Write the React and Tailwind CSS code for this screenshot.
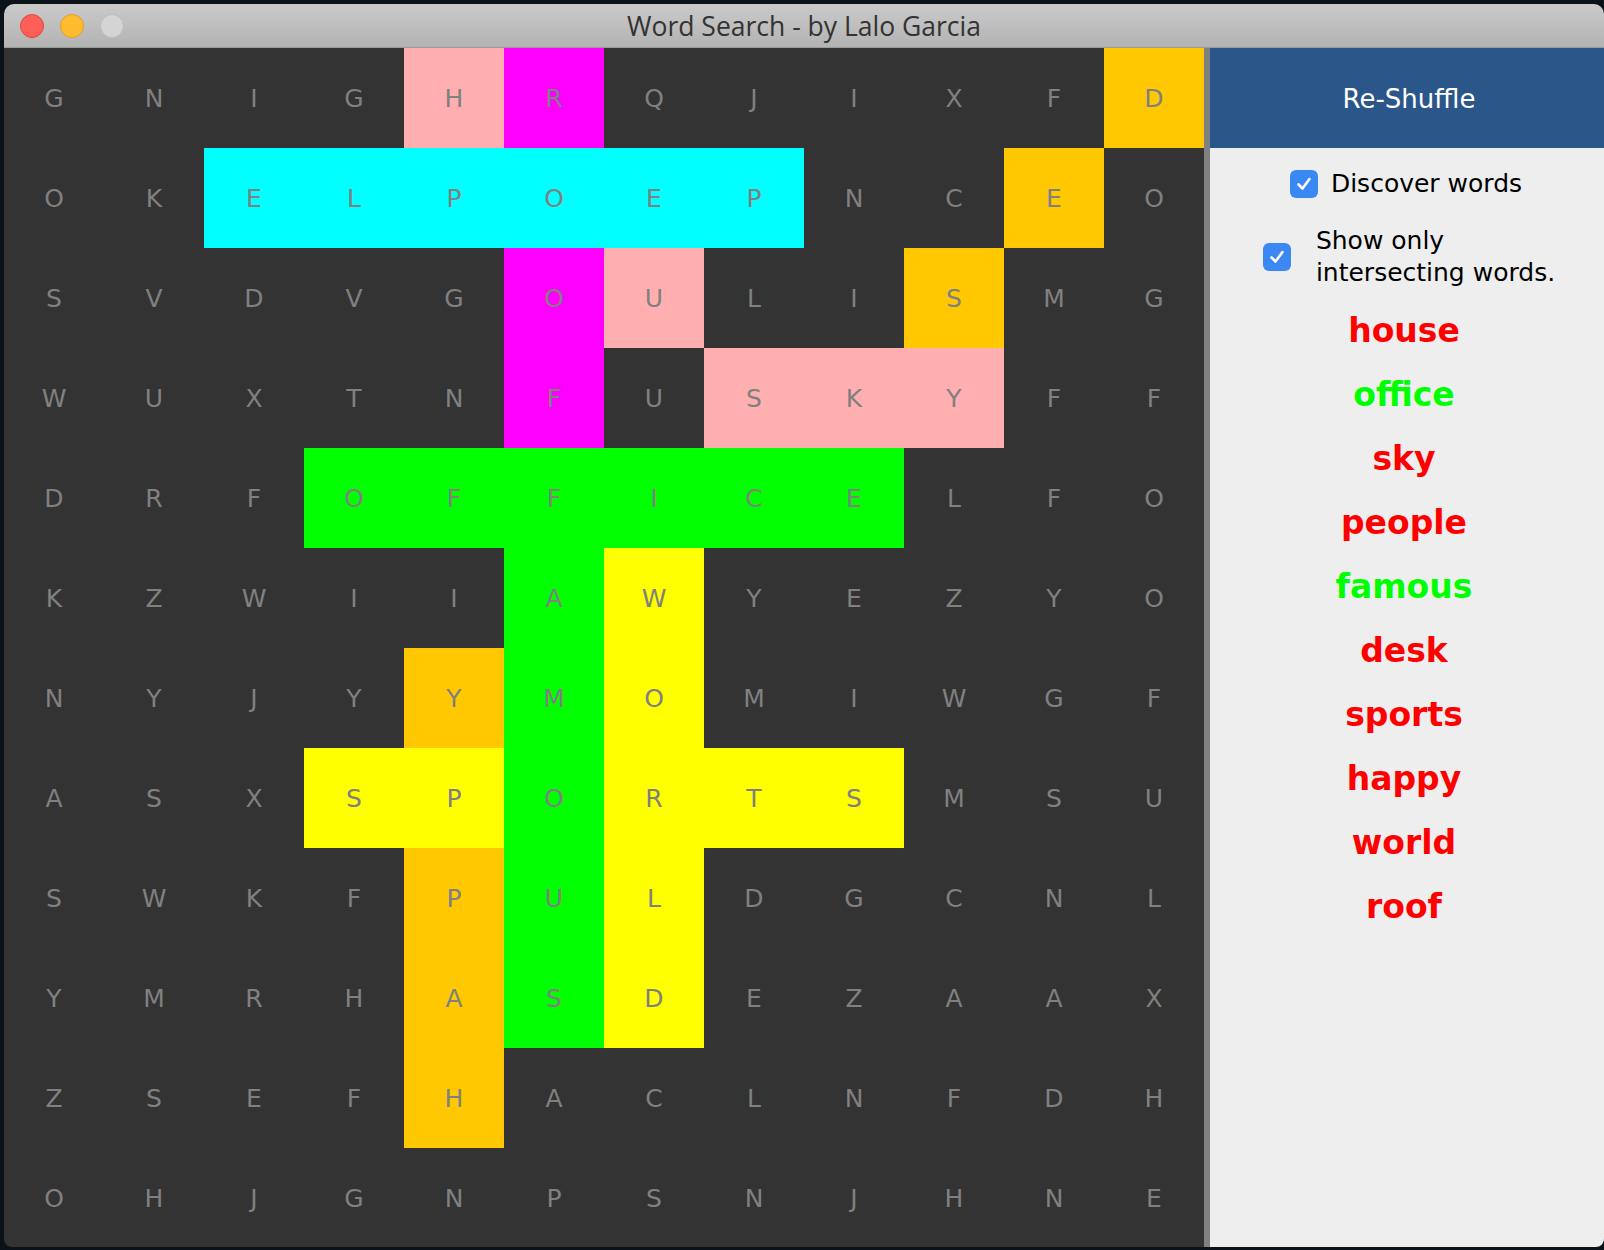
import React from "react";

const rows = [
  "GNIGHRQJIXFD",
  "OKELPOEPNCEO",
  "SVDVGOULISMG",
  "WUXTNFUSKYFF",
  "DRFOFFICELFO",
  "KZWIIAWYEZYO",
  "NYJYYMOMIWGF",
  "ASXSPORTSMSU",
  "SWKFPULDGCNL",
  "YMRHASDEZAAX",
  "ZSEFHACLNFDH",
  "OHJGNPSNJHNE",
];

// cell highlights, "row,col" -> class
const P = "bg-[#ffafaf]";
const M = "bg-[#ff00ff]";
const O = "bg-[#ffc800]";
const C = "bg-[#00ffff]";
const G = "bg-[#00ff00]";
const Y = "bg-[#ffff00]";

const marks = {
  "0,4": P, "0,5": M, "0,11": O,
  "1,2": C, "1,3": C, "1,4": C, "1,5": C, "1,6": C, "1,7": C, "1,10": O,
  "2,5": M, "2,6": P, "2,9": O,
  "3,5": M, "3,7": P, "3,8": P, "3,9": P,
  "4,3": G, "4,4": G, "4,5": G, "4,6": G, "4,7": G, "4,8": G,
  "5,5": G, "5,6": Y,
  "6,4": O, "6,5": G, "6,6": Y,
  "7,3": Y, "7,4": Y, "7,5": G, "7,6": Y, "7,7": Y, "7,8": Y,
  "8,4": O, "8,5": G, "8,6": Y,
  "9,4": O, "9,5": G, "9,6": Y,
  "10,4": O,
};

const words = [
  { w: "house", found: false },
  { w: "office", found: true },
  { w: "sky", found: false },
  { w: "people", found: false },
  { w: "famous", found: true },
  { w: "desk", found: false },
  { w: "sports", found: false },
  { w: "happy", found: false },
  { w: "world", found: false },
  { w: "roof", found: false },
];

const font = { fontFamily: '"DejaVu Sans", "Open Sans", sans-serif' };

const Check = () => (
  <span className="w-[28px] h-[28px] rounded-[6px] bg-[#3b88f5] flex items-center justify-center shrink-0">
    <svg width="18" height="18" viewBox="0 0 18 18" fill="none">
      <path d="M3.5 9.5 L7.5 13.5 L14.5 4" stroke="white" strokeWidth="2.6" strokeLinecap="round" strokeLinejoin="round" />
    </svg>
  </span>
);

export default function App() {
  return (
    <div className="w-[1604px] h-[1250px] bg-[#0c1318] pl-[4px] pt-[4px] overflow-hidden" style={font}>
      <div className="w-[1600px] h-[1243px] rounded-t-[10px] rounded-b-[8px] overflow-hidden flex flex-col">
        {/* Title bar */}
        <div className="h-[44px] shrink-0 bg-gradient-to-b from-[#cacaca] to-[#b3b3b3] border-b border-[#9c9c9c] flex items-center relative">
          <div className="flex items-center gap-[16px] pl-[16px]">
            <span className="w-[24px] h-[24px] rounded-full bg-[#fe5f57] border border-[#e0443e]" />
            <span className="w-[24px] h-[24px] rounded-full bg-[#febc2e] border border-[#dea123]" />
            <span className="w-[24px] h-[24px] rounded-full bg-[#d4d4d4] border border-[#bcbcbc]" />
          </div>
          <div className="absolute inset-0 flex items-center justify-center text-[26.5px] text-[#333333] pt-[2px]" style={{ fontFamily: '"Open Sans", sans-serif' }}>
            Word Search - by Lalo Garcia
          </div>
        </div>

        <div className="flex flex-1 min-h-0">
          {/* Grid */}
          <div className="w-[1200px] shrink-0 bg-[#333333] grid grid-cols-12 auto-rows-[100px]">
            {rows.map((r, ri) =>
              r.split("").map((ch, ci) => (
                <div
                  key={ri + "-" + ci}
                  className={"flex items-center justify-center pt-[2px] text-[25px] text-[#808080] " + (marks[ri + "," + ci] || "")}
                >
                  {ch}
                </div>
              ))
            )}
          </div>

          <div className="w-[6px] shrink-0 bg-[#808080]" />

          {/* Side panel */}
          <div className="flex-1 bg-[#eeeeee] flex flex-col">
            <div className="h-[100px] bg-[#2a5689] flex items-center justify-center pt-[3px] pl-[4px] text-white text-[26px]">
              Re-Shuffle
            </div>

            <div className="flex items-center justify-center gap-[13px] mt-[20px] pr-[2px]">
              <Check />
              <span className="text-[25px] text-black leading-[32px]">Discover words</span>
            </div>

            <div className="flex items-center justify-center gap-[25px] mt-[25px] pl-[4px]">
              <Check />
              <span className="text-[25px] text-black leading-[32px]">
                Show only
                <br />
                intersecting words.
              </span>
            </div>

            <div className="flex flex-col items-center mt-[10px] pr-[6px]">
              {words.map((x) => (
                <div
                  key={x.w}
                  className={"h-[64px] flex items-center text-[33px] font-bold " + (x.found ? "text-[#00ff00]" : "text-[#ff0000]")}
                >
                  {x.w}
                </div>
              ))}
            </div>
          </div>
        </div>
      </div>
    </div>
  );
}
